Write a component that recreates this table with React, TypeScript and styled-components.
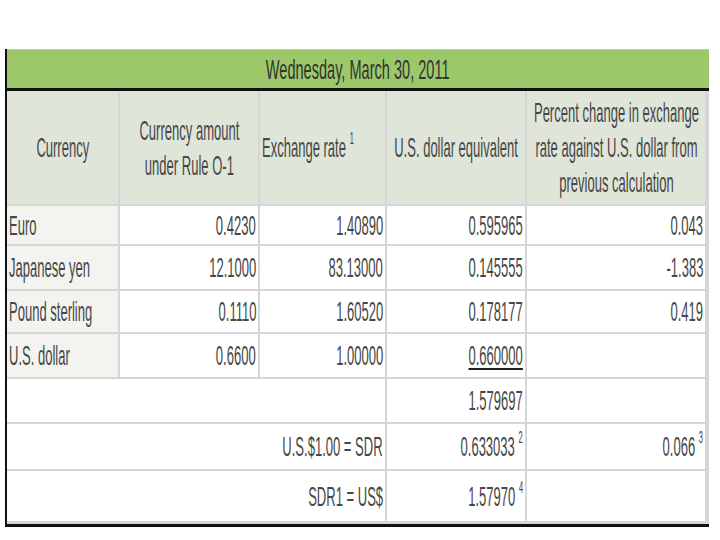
import { Fragment } from "react";
import styled, { createGlobalStyle } from "styled-components";

const GlobalStyle = createGlobalStyle`
    html, body {
        margin: 0;
        padding: 0;
        background: #ffffff;
    }
    body {
        font-family: "Liberation Sans", Arial, sans-serif;
        color: #3d3d3d;
    }
`;

const Frame = styled.div`
    margin: 49px 0 0 5px;
    width: 702px;
    border-left: 2px solid #111;
    border-bottom: 3px solid #111;
`;

const TitleBar = styled.div`
    height: 38px;
    background: #9cc86a;
    border-top: 1px solid #b4d690;
    border-bottom: 3px solid #111;
    display: flex;
    align-items: center;
    justify-content: center;
`;

const Grid = styled.div`
    display: grid;
    grid-template-columns: 111px 138px 125px 138px 178px;
    grid-template-rows: 113px 38px 43px 41px 43px 43px 45px 50px;
    gap: 2px;
    padding: 0 2px 3px 0;
    background: #d6d6d6;
`;

type Align = "left" | "center" | "right";
type Tone = "head" | "label" | "plain";

const tones: Record<Tone, string> = {
    head: "#dfe5d8",
    label: "#f3f3ef",
    plain: "#ffffff",
};

const justify: Record<Align, string> = {
    left: "flex-start",
    center: "center",
    right: "flex-end",
};

const Cell = styled.div<{ $tone?: Tone; $align?: Align; $span?: number }>`
    display: flex;
    align-items: center;
    justify-content: ${(p) => justify[p.$align ?? "right"]};
    background: ${(p) => tones[p.$tone ?? "plain"]};
    grid-column: span ${(p) => p.$span ?? 1};
    padding: 0 2px;
    min-width: 0;
`;

// the source picture is squeezed sideways, so every text run is narrowed
const Txt = styled.span<{ $align?: Align; $size?: number; $sx?: number; $dark?: boolean }>`
    display: inline-block;
    flex-shrink: 0;
    white-space: nowrap;
    text-align: center;
    font-size: ${(p) => p.$size ?? 28}px;
    line-height: 35px;
    color: ${(p) => (p.$dark ? "#333" : "#474747")};
    transform: scaleX(${(p) => p.$sx ?? 0.465});
    transform-origin: ${(p) => p.$align ?? "right"} center;
`;

const Sup = styled.sup`
    font-size: 16px;
    line-height: 0;
    vertical-align: 13px;
    margin-left: 8px;
`;

const Under = styled.span`
    display: inline-block;
    line-height: 25px;
    border-bottom: 2px solid #222;
`;

type Row = { name: string; amount: string; rate: string; usd: string; change: string; under?: boolean };

const rows: Row[] = [
    { name: "Euro", amount: "0.4230", rate: "1.40890", usd: "0.595965", change: "0.043" },
    { name: "Japanese yen", amount: "12.1000", rate: "83.13000", usd: "0.145555", change: "-1.383" },
    { name: "Pound sterling", amount: "0.1110", rate: "1.60520", usd: "0.178177", change: "0.419" },
    { name: "U.S. dollar", amount: "0.6600", rate: "1.00000", usd: "0.660000", change: "", under: true },
];

function Lines({ lines, align = "center" }: { lines: string[]; align?: Align }) {
    return (
        <Txt $align={align}>
            {lines.map((l, i) => (
                <div key={i}>{l}</div>
            ))}
        </Txt>
    );
}

export default function App() {
    return (
        <>
            <GlobalStyle />
            <Frame>
                <TitleBar>
                    <Txt $align="center" $size={28} $sx={0.52} $dark>
                        Wednesday, March 30, 2011
                    </Txt>
                </TitleBar>
                <Grid>
                    <Cell $tone="head" $align="center">
                        <Lines lines={["Currency"]} />
                    </Cell>
                    <Cell $tone="head" $align="center">
                        <Lines lines={["Currency amount", "under Rule O-1"]} />
                    </Cell>
                    <Cell $tone="head" $align="left">
                        <Txt $align="left">
                            Exchange rate<Sup>1</Sup>
                        </Txt>
                    </Cell>
                    <Cell $tone="head" $align="center">
                        <Lines lines={["U.S. dollar equivalent"]} />
                    </Cell>
                    <Cell $tone="head" $align="center">
                        <Lines
                            lines={[
                                "Percent change in exchange",
                                "rate against U.S. dollar from",
                                "previous calculation",
                            ]}
                        />
                    </Cell>

                    {rows.map((r) => (
                        <Fragment key={r.name}>
                            <Cell $tone="label" $align="left">
                                <Txt $align="left">{r.name}</Txt>
                            </Cell>
                            <Cell>
                                <Txt>{r.amount}</Txt>
                            </Cell>
                            <Cell>
                                <Txt>{r.rate}</Txt>
                            </Cell>
                            <Cell>
                                <Txt>{r.under ? <Under>{r.usd}</Under> : r.usd}</Txt>
                            </Cell>
                            <Cell>
                                <Txt>{r.change}</Txt>
                            </Cell>
                        </Fragment>
                    ))}

                    <Cell $span={3} />
                    <Cell>
                        <Txt>1.579697</Txt>
                    </Cell>
                    <Cell />

                    <Cell $span={3}>
                        <Txt>U.S.$1.00 = SDR</Txt>
                    </Cell>
                    <Cell>
                        <Txt>
                            0.633033<Sup>2</Sup>
                        </Txt>
                    </Cell>
                    <Cell>
                        <Txt>
                            0.066<Sup>3</Sup>
                        </Txt>
                    </Cell>

                    <Cell $span={3}>
                        <Txt>SDR1 = US$</Txt>
                    </Cell>
                    <Cell>
                        <Txt>
                            1.57970<Sup>4</Sup>
                        </Txt>
                    </Cell>
                    <Cell />
                </Grid>
            </Frame>
        </>
    );
}
